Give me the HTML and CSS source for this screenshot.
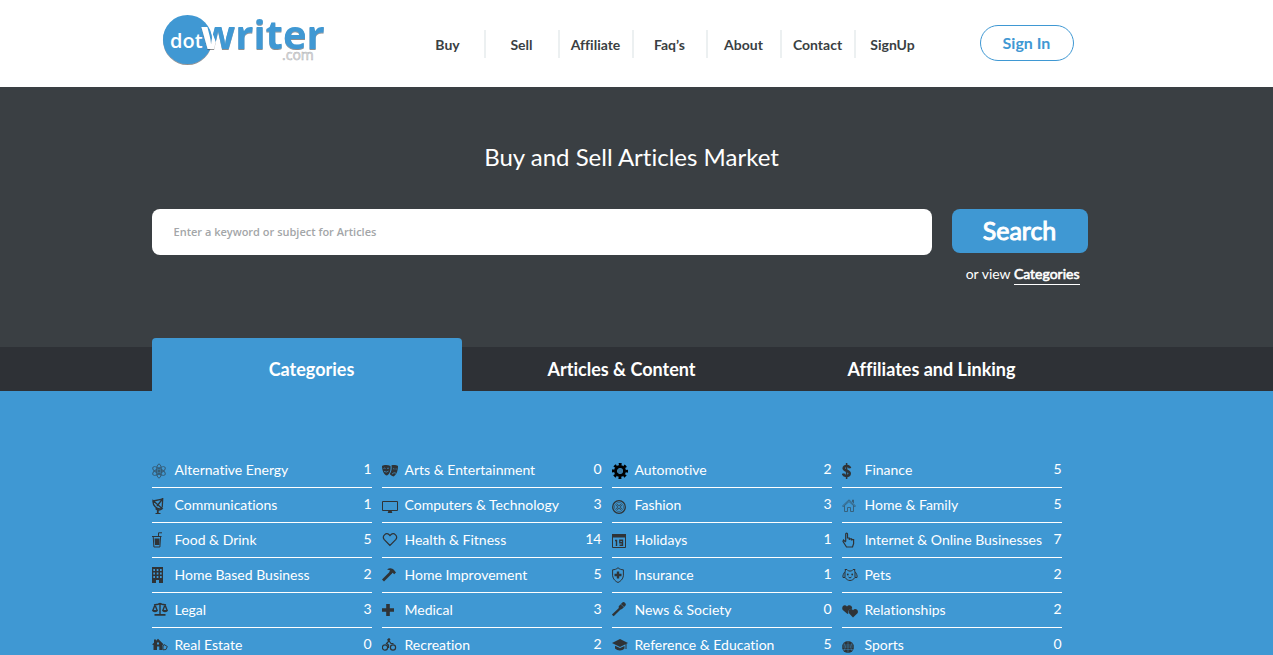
FILE: index.html
```html
<!DOCTYPE html>
<html lang="en">
<head>
<meta charset="utf-8">
<title>DotWriter - Buy and Sell Articles Market</title>
<link rel="stylesheet" href="styles.css">
</head>
<body>
<header class="header">
  <div class="container header-row">
    <a class="logo" href="#" aria-label="dotwriter.com">
      <svg width="170" height="60" viewBox="0 0 170 60">
        <defs>
          <linearGradient id="split" gradientUnits="userSpaceOnUse" x1="53" y1="29" x2="72" y2="22"><stop offset=".48" stop-color="#fff"/><stop offset=".52" stop-color="#3f98d3"/></linearGradient>
          <filter id="shade" x="-10%" y="-10%" width="120%" height="130%"><feDropShadow dx="0" dy="1" stdDeviation="0.7" flood-color="#444" flood-opacity="0.6"/></filter>
        </defs>
        <circle cx="35.500" cy="26.500" r="24.500" fill="#3f98d3" filter="url(#shade)"/>
        <text class="logo-main" x="49" y="36" filter="url(#shade)">writer</text>
        <text class="logo-dot" x="18" y="35">dot</text>
        <text class="logo-com" x="130" y="47">.com</text>
      </svg>
    </a>
    <nav class="nav">
      <a href="#">Buy</a><a href="#">Sell</a><a href="#">Affiliate</a><a href="#">Faq’s</a><a href="#">About</a><a href="#">Contact</a><a href="#">SignUp</a>
    </nav>
    <a class="sign-in" href="#">Sign In</a>
  </div>
</header>
<section class="hero">
  <div class="container">
    <h1 class="hero-title">Buy and Sell Articles Market</h1>
    <form class="search">
      <input class="search-input" type="text" aria-label="Keyword or subject" placeholder="Enter a keyword or subject for Articles">
      <div class="search-side">
        <button class="search-button" type="button">Search</button>
        <p class="search-alt">or view <a href="#categories">Categories</a></p>
      </div>
    </form>
  </div>
</section>
<div class="tabs-bar">
  <div class="container tabs">
    <a class="tab tab-active" href="#categories">Categories</a>
    <a class="tab" href="#">Articles &amp; Content</a>
    <a class="tab" href="#">Affiliates and Linking</a>
  </div>
</div>
<main class="panel" id="categories">
  <div class="container">
    <ul class="categories">
      <li><svg class="thin faint" viewBox="0 0 16 16"><g fill="none" stroke="currentColor"><ellipse cx="7" cy="8" rx="2.600" ry="7"/><ellipse cx="7" cy="8" rx="2.600" ry="7" transform="rotate(60 7 8)"/><ellipse cx="7" cy="8" rx="2.600" ry="7" transform="rotate(-60 7 8)"/></g><circle cx="7" cy="8" r="1.800" fill="currentColor"/></svg><a href="#">Alternative Energy</a><span>1</span></li>
      <li><svg class="thin" viewBox="0 0 16 16"><path fill="currentColor" d="M0 3c2-1.300 6-1.300 8.500 0C9 6.500 8 11 5 12.500 2 12 0 7.500 0 3zM9.500 2.200C12 1.700 14.500 2 16 3c0 4.500-1.500 9-4.500 10.500-1.500-.3-3-1.500-3.700-2.500C9.500 8.500 10 5.500 9.500 2.200z"/><path fill="none" stroke="#3f98d3" stroke-width=".7" d="M1.500 5.500q1.200-.8 2 0M5 5.500q1.200-.8 2 0M2 8.300q2.500 1.700 4.500-.2M11 6q1-.8 1.500 0M13.500 6h1.200M10 11q2-2.200 4-.8"/></svg><a href="#">Arts &amp; Entertainment</a><span>0</span></li>
      <li><svg class="black" viewBox="0 0 16 16"><g fill="none" stroke="currentColor"><circle cx="8" cy="8" r="4.500" stroke-width="3"/><circle cx="8" cy="8" r="6.700" stroke-width="2.600" stroke-dasharray="2.800 2.462" stroke-dashoffset="1.400"/></g><circle cx="8" cy="8" r="2.500" fill="#333" opacity=".3"/></svg><a href="#">Automotive</a><span>2</span></li>
      <li><svg class="thin" viewBox="0 0 16 16"><path fill="none" stroke="currentColor" stroke-width="2.600" d="M8 5.200C7.500 2.500 1.700 2 1.700 5.200c0 2.800 6 2.300 6 5.300C7.700 14 1.500 13.500 1 10.500"/><path stroke="currentColor" stroke-width="1.500" d="M4.600 0v16"/></svg><a href="#">Finance</a><span>5</span></li>
      <li><svg class="thin" viewBox="0 0 16 16"><path fill="none" stroke="currentColor" stroke-width="1.300" d="M1 2.500C.5 7 4.500 12 10 10.500zM1.200 3L9 1.500l1.700-1-.5 9M5 8l5.500-7M3.500 10.500c2 2 4.500 2 7 0"/><path stroke="currentColor" stroke-width="1.800" d="M5.800 11v4.500"/><path stroke="currentColor" d="M3.500 15.500h5"/></svg><a href="#">Communications</a><span>1</span></li>
      <li><svg class="low" viewBox="0 0 16 16"><path fill="none" stroke="currentColor" d="M.5 2.500h15v9H.5z"/><path fill="currentColor" d="M6.500 11.500h3l.8 2.500H5.700z"/></svg><a href="#">Computers &amp; Technology</a><span>3</span></li>
      <li><svg class="low" viewBox="0 0 16 16"><g fill="none" stroke="currentColor"><circle cx="7" cy="8" r="6.300" stroke-width="1.300"/><circle cx="7" cy="8" r="4.500" stroke-width=".5"/><circle cx="5.500" cy="6.500" r=".9" stroke-width=".8"/><circle cx="8.500" cy="6.500" r=".9" stroke-width=".8"/><circle cx="5.500" cy="9.500" r=".9" stroke-width=".8"/><circle cx="8.500" cy="9.500" r=".9" stroke-width=".8"/></g></svg><a href="#">Fashion</a><span>3</span></li>
      <li><svg class="thin faint" viewBox="0 0 16 16"><path fill="none" stroke="currentColor" stroke-width=".9" d="M.5 8L7 1.800 13.500 8l-1 .5L7 3.500 1.500 8.500zM2.500 8v5.500h3V9.500h3v4h3V8M10.500 4V2h1v3"/></svg><a href="#">Home &amp; Family</a><span>5</span></li>
      <li><svg viewBox="0 0 16 16"><path fill="none" stroke="currentColor" d="M0 4.500h9.500M1.200 4.500l.7 10.500h6l.7-10.500M6.500 4V.8h3.500"/><path fill="currentColor" d="M2.500 6.500h5V13H3z"/></svg><a href="#">Food &amp; Drink</a><span>5</span></li>
      <li><svg viewBox="0 0 16 16"><path fill="none" stroke="currentColor" stroke-width="1.200" d="M8 13.500L2.300 7.700C-.5 4 4 0 7.200 2.800L8 3.700l.8-.9C12 0 16.500 4 13.700 7.700z"/></svg><a href="#">Health &amp; Fitness</a><span>14</span></li>
      <li><svg class="thin" viewBox="0 0 16 16"><path fill="none" stroke="currentColor" d="M.5 1.500h13v13H.5z"/><path fill="currentColor" d="M0 1h14v3.500H0z"/><path fill="none" stroke="currentColor" stroke-width="1.400" d="M3 7.500h1.500V13M10.500 9.800H7.800V7.200h2.700v5.100H7.500"/></svg><a href="#">Holidays</a><span>1</span></li>
      <li><svg viewBox="0 0 16 16"><path fill="none" stroke="currentColor" stroke-width="1.200" d="M3.700 9.500V2c0-1.200 1.800-1.200 1.800 0v4h1.800l.3.600 2 .2.300.6 1.700.2v4L10.500 15h-6L1 9.500 1.500 8l2.200 2M7.300 6v2M9.500 6.500v2"/></svg><a href="#">Internet &amp; Online Businesses</a><span>7</span></li>
      <li><svg viewBox="0 0 16 16"><path fill="currentColor" fill-rule="evenodd" d="M0 0h11v16H7v-3H4v3H0zM1.300 2v2H3V2zM4.700 2v2h1.700V2zM8 2v2h1.700V2zM1.300 5.500v2H3v-2zM4.700 5.500v2h1.700v-2zM8 5.500v2h1.700v-2zM1.300 9v2H3V9zM4.700 9v2h1.700V9zM8 9v2h1.700V9z"/></svg><a href="#">Home Based Business</a><span>2</span></li>
      <li><svg viewBox="0 0 16 16"><path fill="none" stroke="currentColor" stroke-width="2.800" d="M1 13.500L9 5.500"/><path fill="currentColor" d="M5 2.500C8 .3 10.500 1.500 12 3l2 2.500-1.800 1.700-1.500-1.500-1.500 1.300-2-2 1-1.200C7.500 3 6.500 2.800 5 2.500z"/></svg><a href="#">Home Improvement</a><span>5</span></li>
      <li><svg viewBox="0 0 16 16"><path fill="none" stroke="currentColor" d="M6 .7C4.500 2.200 2.500 2.800.6 2.800v6C1 12 3.500 14.500 6 15.500c2.500-1 5-3.500 5.400-6.700v-6C9.500 2.800 7.500 2.200 6 .7z"/><path stroke="currentColor" stroke-width="2.400" d="M6 4.500v7M2.500 8h7"/></svg><a href="#">Insurance</a><span>1</span></li>
      <li><svg viewBox="0 0 16 16"><path fill="none" stroke="currentColor" d="M3.500 4L3 2.500h2L6.500 4h3L11 2.500h2L12.500 4c2 2.500 3 4.500 2.500 6.500h-2C10 14.500 6 14.500 3 10.500H1C.5 8.500 1.500 6.500 3.500 4zM3 5v5.500M13 5v5.500M6.500 10l1.500 1 1.500-1"/><circle cx="5.800" cy="7.500" r=".9" fill="currentColor"/><circle cx="10.200" cy="7.500" r=".9" fill="currentColor"/></svg><a href="#">Pets</a><span>2</span></li>
      <li><svg viewBox="0 0 16 16"><path fill="none" stroke="currentColor" stroke-width="1.400" d="M2 3l4-.8L8 1.500l2 .7 4 .8M8 1v12M3 3L.8 8.500M3 3l2.200 5.500M13 3l-2.200 5.500M13 3l2.200 5.500"/><path fill="currentColor" d="M0 8h6c-.3 3-5.700 3-6 0zM10 8h6c-.3 3-5.700 3-6 0zM2.500 12h11v1.700h-11z"/></svg><a href="#">Legal</a><span>3</span></li>
      <li><svg viewBox="0 0 16 16"><path stroke="currentColor" stroke-width="3.600" d="M6 2v12M0 8h12"/></svg><a href="#">Medical</a><span>3</span></li>
      <li><svg viewBox="0 0 16 16"><path stroke="currentColor" stroke-width="2.400" d="M.8 13.500L9 5.500"/><path stroke="currentColor" stroke-width="4.500" stroke-linecap="round" d="M9 5l2.500-2.500"/><path stroke="#3f98d3" stroke-width=".5" d="M8 1.500l5 4.500"/></svg><a href="#">News &amp; Society</a><span>0</span></li>
      <li><svg class="thin" viewBox="0 0 16 16"><path fill="currentColor" d="M5.500 11L.8 7C-1.200 4 2.500.5 5 3.500c2-3 6-.5 5 2.200-2.500 0-4.500 2-3.500 4.500z"/><path fill="currentColor" d="M11 14.500L7 10.300C5.500 7 9 4.500 11 7.300c2-2.800 6.300-.3 4.500 3z"/></svg><a href="#">Relationships</a><span>2</span></li>
      <li><svg viewBox="0 0 16 16"><path fill="currentColor" fill-rule="evenodd" d="M0 7.500l2-1.700V2.500h2v1.200l2-2L11.500 7.200l-1 .8v5H7.300V9.500H5V13H1.500V8zM5 5.500v2h2v-2z"/><path fill="none" stroke="currentColor" stroke-width=".9" d="M12 7.500l3.300 2-1.300 3-3 .3v-3z"/></svg><a href="#">Real Estate</a><span>0</span></li>
      <li><svg viewBox="0 0 16 16"><g fill="none" stroke="currentColor" stroke-width="1.200"><circle cx="3" cy="10.500" r="2.600"/><circle cx="11" cy="10.500" r="2.600"/><path d="M6.500 11V8L4.500 6.500 7 4l2 2.500h2.500M7 4L5.500 2.500"/></g><circle cx="7" cy="2.500" r="1.300" fill="currentColor"/></svg><a href="#">Recreation</a><span>2</span></li>
      <li><svg viewBox="0 0 16 16"><path fill="currentColor" d="M0 6l8-4 8 4-1.500.8V12h-1V7.300L8 10 0 6zM3 8.700l5 2.300 4.500-2v2.500c-2 2.500-7 2.500-9.500 0z"/></svg><a href="#">Reference &amp; Education</a><span>5</span></li>
      <li><svg class="low" viewBox="0 0 16 16"><circle cx="6" cy="8" r="6" fill="currentColor"/><path fill="none" stroke="#3f98d3" stroke-width=".4" d="M6 2v12M0 8h12M2 4q3 4 0 8M10 4q-3 4 0 8M1 6h10M1 10.500h10"/></svg><a href="#">Sports</a><span>0</span></li>
    </ul>
  </div>
</main>
</body>
</html>
```

FILE: styles.css
```css
* { box-sizing: border-box; }
body {
  margin: 0;
  height: 100vh;
  overflow: hidden;
  background: #3f98d3;
  color: #fff;
  font-family: Lato, sans-serif;
  font-size: 14px;
  font-variant-ligatures: none;
}
a { color: inherit; text-decoration: none; }
.container { max-width: 970px; margin: 0 auto; }

.header { background: #fff; padding: 13px 0 14px; }
.header-row { display: flex; align-items: flex-start; }
.logo { display: block; height: 60px; margin-right: 90px; }
.logo svg { overflow: visible; }
.logo-main { font: bold 40px "Open Sans", "Noto Sans", sans-serif; fill: url(#split); }
.logo-dot { font: 600 20px "Open Sans", "Noto Sans", sans-serif; fill: #fff; }
.logo-com { font: 14px "Open Sans", sans-serif; fill: #e4e5e6; stroke: #b0b2b5; stroke-width: 0.5px; }
.nav { display: flex; margin-top: 17px; color: #3a3f43; }
.nav a {
  width: 74px;
  padding-top: 1px;
  line-height: 27px;
  font-size: 14px;
  font-weight: bold;
  text-align: center;
  border-right: 2px solid #ecf0f1;
}
.nav a:last-child { border-right: 0; }
.sign-in {
  width: 94px;
  margin: 12px 48px 0 auto;
  border: 1px solid #3f98d3;
  border-radius: 18px;
  color: #3f98d3;
  font-size: 16px;
  font-weight: bold;
  line-height: 34px;
  text-align: center;
}

.hero { background: #3a3f43; padding: 54px 0 62px; }
.hero-title {
  margin: 0 10px 36px 0;
  font-size: 24px;
  font-weight: normal;
  line-height: 32px;
  text-align: center;
}
.search { display: flex; gap: 20px; align-items: flex-start; padding-right: 34px; }
.search-input {
  flex: 1;
  height: 46px;
  padding: 0 22px 2px;
  border: 0;
  border-radius: 8px;
  background: #fff;
  font: 600 11px "Open Sans", sans-serif;
}
.search-input::placeholder { color: #a3a6a8; opacity: 1; }
.search-side { width: 136px; }
.search-button {
  display: block;
  width: 100%;
  height: 44px;
  padding: 0 0 2px;
  border: 0;
  border-radius: 8px;
  background: #3f98d3;
  color: #fff;
  font: 25px Lato, sans-serif;
  -webkit-text-stroke: 1px;
}
.search-alt { margin: 11px 8px 0 0; line-height: 20px; text-align: right; }
.search-alt a { display: inline-block; border-bottom: 1px solid #fff; -webkit-text-stroke: 0.6px; }

.tabs-bar { background: #2e3136; }
.tabs { display: flex; }
.tab {
  width: 310px;
  padding-left: 10px;
  line-height: 44px;
  font-size: 18px;
  font-weight: bold;
  text-align: center;
}
.tab-active {
  margin-top: -9px;
  padding-top: 9px;
  border-radius: 4px 4px 0 0;
  background: #3f98d3;
}
.panel { padding-top: 62px; }
.categories {
  display: grid;
  grid-template-columns: repeat(4, 220px);
  column-gap: 10px;
  margin: 0;
  padding: 0;
  list-style: none;
}
.categories li {
  display: flex;
  height: 35px;
  gap: 7px;
  border-bottom: 1px solid #fff;
  line-height: 34px;
}
.categories svg { width: 16px; height: 16px; margin-top: 9px; color: #2f3336; }
.categories .low { margin-top: 11px; }
.categories .thin { margin-top: 10px; }
.categories .faint { opacity: 0.6; }
.categories .black { margin-top: 10px; color: #000; }
.categories span { margin-left: auto; line-height: 32px; }
```
